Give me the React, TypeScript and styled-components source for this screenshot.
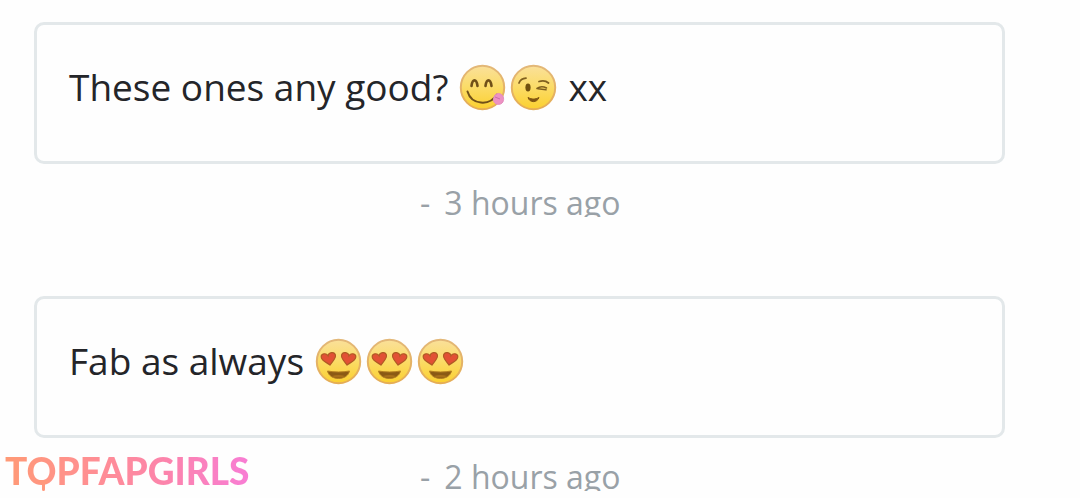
import React from "react";
import styled, { createGlobalStyle } from "styled-components";

const GlobalStyle = createGlobalStyle`
  * { box-sizing: border-box; }
  body {
    margin: 0;
    background: #fefefe;
    font-family: "Open Sans", "Noto Sans", sans-serif;
    overflow: hidden;
  }
`;

const Thread = styled.main`
  display: flex;
  flex-direction: column;
  gap: 79px;
  padding: 22px 75px 0 34px;
`;

const Message = styled.article`
  display: flex;
  flex-direction: column;
  gap: 22px;
`;

const Bubble = styled.div`
  min-height: 142px;
  padding: 34px 32px;
  border: 3px solid #e3e8ea;
  border-radius: 10px;
  background: #fefefe;
`;

const Body = styled.p`
  display: flex;
  align-items: center;
  gap: 11px;
  margin: 0;
  color: #242529;
  font-size: 37px;
  line-height: 56px;
`;

const EmojiGroup = styled.span`
  display: inline-flex;
  gap: 4px;
`;

const Emoji = styled.svg`
  display: block;
  width: 47px;
  height: 47px;
`;

const Time = styled.time`
  display: flex;
  gap: 14px;
  height: 31px;
  padding-left: 386px;
  overflow: hidden;
  color: #99a1a7;
  font-size: 32px;
  line-height: 34px;
`;

const Brand = styled.a`
  position: fixed;
  left: 5px;
  bottom: 4px;
  display: block;
  color: inherit;
  text-decoration: none;
`;

const BrandText = styled.span`
  display: block;
  background: linear-gradient(90deg, #ff9a76 0%, #ff8f92 35%, #fc84ac 66%, #f87dd4 100%);
  background-clip: text;
  -webkit-background-clip: text;
  color: transparent;
  font-family: Lato, sans-serif;
  font-size: 37px;
  font-weight: 900;
  line-height: 46px;
`;

const Drip = styled.svg`
  position: absolute;
  left: 32px;
  bottom: 0;
  width: 14px;
  height: 17px;
`;

function Face({ label, children }: { label: string; children: React.ReactNode }) {
  return (
    <Emoji viewBox="0 0 47 47" role="img" aria-label={label}>
      <defs>
        <linearGradient id="skin" x1="0" y1="0" x2="0" y2="1">
          <stop offset="0" stopColor="#fae09a" />
          <stop offset="0.45" stopColor="#fbdc6c" />
          <stop offset="1" stopColor="#fbd02f" />
        </linearGradient>
        <linearGradient id="rim" x1="0" y1="0" x2="0" y2="1">
          <stop offset="0" stopColor="#e3b878" />
          <stop offset="1" stopColor="#e5ad55" />
        </linearGradient>
      </defs>
      <circle cx="23.500" cy="23.500" r="21.700" fill="url(#skin)" stroke="url(#rim)" strokeWidth="2" />
      {children}
    </Emoji>
  );
}

function Yum() {
  return (
    <Face label="Face savoring food">
      <g fill="none" stroke="#705018" strokeLinecap="round" strokeLinejoin="round">
        <path d="M12.500 22c1-7.500 5-7.500 6 0M26.500 22c1-7.500 5-7.500 6 0" strokeWidth="2.600" />
        <path d="M8.500 27.500c4 13.500 22 15 29.500 3" strokeWidth="2" />
      </g>
      <path d="M35.500 32c1-2.500 4.500-3.500 7-1.500 3 2.500 2.800 7.500-.5 9.300-3.300 1.700-7.300-.3-7.600-3.500-.1-1.600.5-3 1.100-4.300Z" fill="#ed91c3" stroke="#e48fbd" />
      <path d="m36 33 5 2" stroke="#cc6ca6" />
    </Face>
  );
}

function Wink() {
  return (
    <Face label="Winking face">
      <g fill="none" stroke="#80601f" strokeLinecap="round" strokeLinejoin="round">
        <path d="M9 19c1.200-3.200 3.500-4.500 7-4.800M29 17.500c3.500-1.200 7-.8 9.500 1.500" strokeWidth="1.800" />
        <path d="M27 24.500c3-2.300 6.500-2 9.500-.5M28 24.800l8 1" strokeWidth="1.600" />
      </g>
      <ellipse cx="18" cy="23.500" rx="2.600" ry="3.900" fill="#70500f" />
      <path d="M18 33.500c4 2 7 2 11 0-1.800 5.500-9.500 5.500-11 0Z" fill="#805512" stroke="#805512" strokeLinejoin="round" />
    </Face>
  );
}

function HeartEyes() {
  return (
    <Face label="Smiling face with heart eyes">
      <g fill="#e25035" stroke="#b05a24" strokeWidth="1.200">
        <path d="M15 27c-3-2.500-8.500-4-8.800-8-.2-3.500 4.800-4.500 6.800-1.200.5-3.700 6.500-4.600 7.400-.8.900 3.500-3.100 6.500-5.400 10Z" />
        <path d="M32 27c-2.300-3.500-6.300-6.500-5.400-10 .9-3.800 6.900-2.900 7.400.8 2-3.300 7-2.300 6.800 1.200-.3 4-5.800 5.500-8.800 8Z" />
      </g>
      <path d="M12.500 33c7 1.300 15 1.300 22 0-2 10-20 10-22 0Z" fill="#8b5a14" stroke="#b48022" strokeLinejoin="round" />
      <path d="M17 38c4-1.500 9-1.500 13 0-3.500 2-9.500 2-13 0Z" fill="#a8701b" />
    </Face>
  );
}

export default function App() {
  return (
    <>
      <GlobalStyle />
      <Thread>
        <Message>
          <Bubble>
            <Body>
              <span>These ones any good?</span>
              <EmojiGroup><Yum /><Wink /></EmojiGroup>
              <span>xx</span>
            </Body>
          </Bubble>
          <Time><span>-</span><span>3 hours ago</span></Time>
        </Message>
        <Message>
          <Bubble>
            <Body>
              <span>Fab as always</span>
              <EmojiGroup><HeartEyes /><HeartEyes /><HeartEyes /></EmojiGroup>
            </Body>
          </Bubble>
          <Time><span>-</span><span>2 hours ago</span></Time>
        </Message>
      </Thread>
      <Brand href="#">
        <BrandText>TOPFAPGIRLS</BrandText>
        <Drip viewBox="0 0 14 17" aria-hidden="true">
          <path d="M1 3h11v2c-2 0-2 2-4 2v5.500a1.500 1.500 0 1 1-3 0V7C3 7 3 5 1 5Z" fill="#ff987c" />
        </Drip>
      </Brand>
    </>
  );
}
